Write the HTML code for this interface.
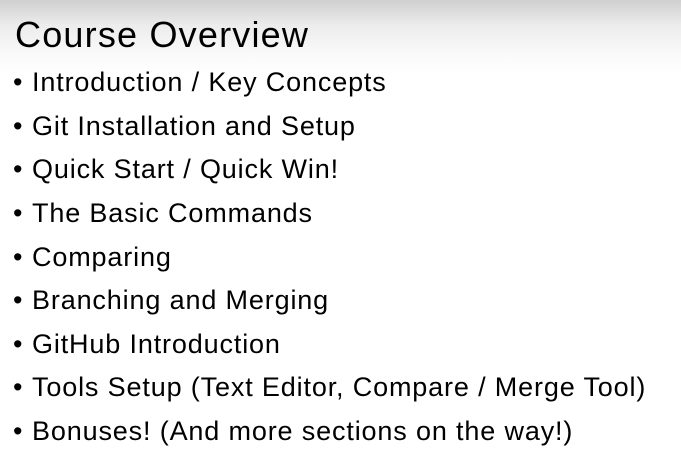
<!DOCTYPE html>
<html><head><style>
html,body{margin:0;padding:0}
body{width:681px;height:454px;overflow:hidden;background:linear-gradient(#cfcfcf 0px,#ececec 25px,#fafafa 55px,#fff 75px);font-family:"Liberation Sans",sans-serif;color:#000;position:relative}
.t{position:absolute;left:15px;top:14px;font-size:36px;line-height:42px;letter-spacing:1.2px;font-weight:normal}
.b{position:absolute;left:13px;font-size:27px;line-height:30px;white-space:nowrap;letter-spacing:0.85px}
.b span{display:inline-block;width:19px;letter-spacing:0}
</style></head><body>
<div class="t">Course Overview</div>
<div class="b" style="top:67px"><span>•</span>Introduction / Key Concepts</div>
<div class="b" style="top:111px"><span>•</span>Git Installation and Setup</div>
<div class="b" style="top:154px"><span>•</span>Quick Start / Quick Win!</div>
<div class="b" style="top:198px"><span>•</span>The Basic Commands</div>
<div class="b" style="top:242px"><span>•</span>Comparing</div>
<div class="b" style="top:285px"><span>•</span>Branching and Merging</div>
<div class="b" style="top:329px"><span>•</span>GitHub Introduction</div>
<div class="b" style="top:372px"><span>•</span>Tools Setup (Text Editor, Compare / Merge Tool)</div>
<div class="b" style="top:416px"><span>•</span>Bonuses! (And more sections on the way!)</div>
</body></html>
